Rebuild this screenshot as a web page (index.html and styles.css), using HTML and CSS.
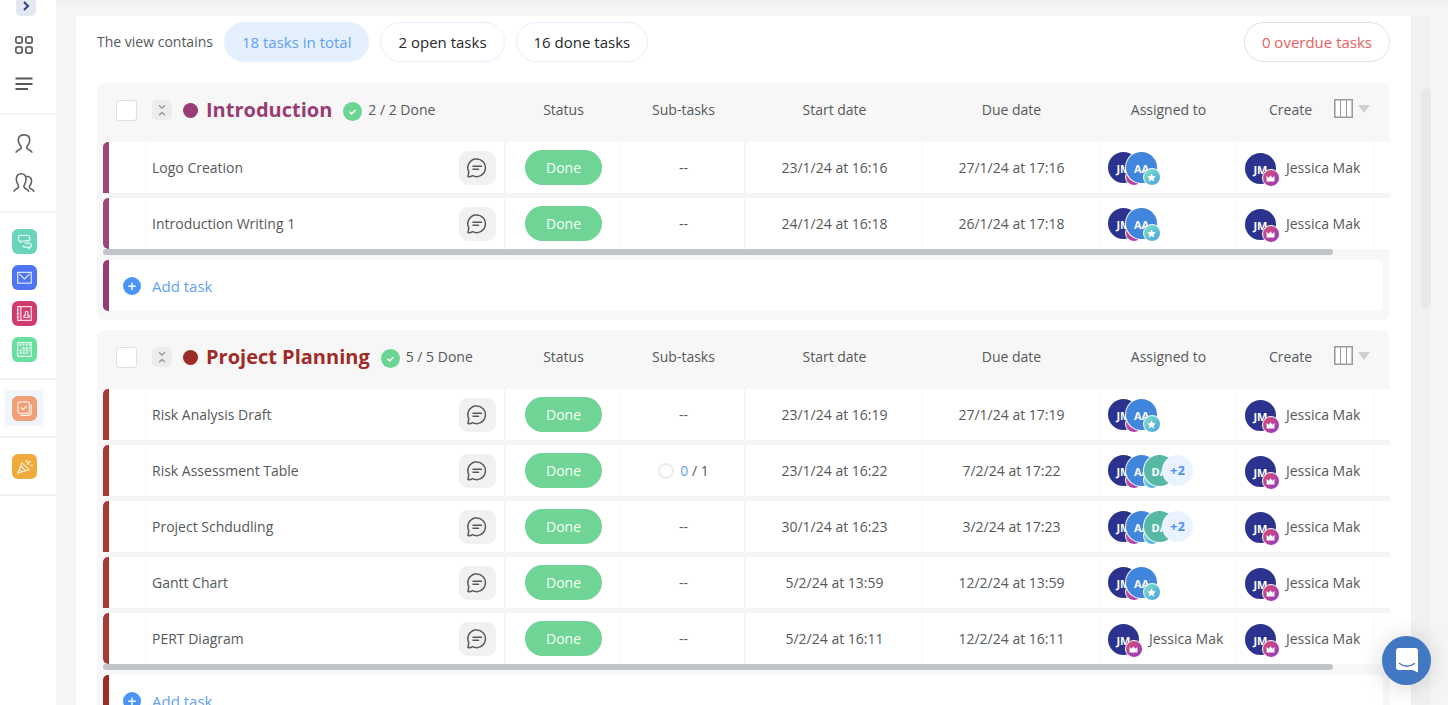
FILE: index.html
```html
<!DOCTYPE html>
<html lang="en">
<head>
<meta charset="utf-8">
<title>Tasks</title>
<link rel="stylesheet" href="styles.css">
</head>
<body>
<svg class="sprite" aria-hidden="true">
  <symbol id="comment" viewBox="0 0 20 20"><path d="M1 18.600 1.800 13.800A8.800 8.800 0 1 1 5.600 17.600Q3.500 18.900 1 18.600ZM6 8.200H14.500M6 11.300H11.500" fill="none" stroke="currentColor" stroke-width="1.500" stroke-linejoin="round" stroke-linecap="round"/></symbol>
  <symbol id="crown" viewBox="0 0 10 8"><path d="M0.5 1 3 3.2 5 .4 7 3.2 9.500 1V7.500H.5Z" fill="#fff"/></symbol>
  <symbol id="star" viewBox="0 0 10 10"><path d="M5 .3 6.400 3.400 9.800 3.800 7.300 6.100 8 9.500 5 7.800 2 9.500 2.700 6.100.2 3.800 3.600 3.400Z" fill="#fff"/></symbol>
  <symbol id="check" viewBox="0 0 19 19"><circle cx="9.500" cy="9.500" r="9.500" fill="#6bd694"/><path d="M6.600 9.900 8.700 11.900 12.500 8" fill="none" stroke="#fff" stroke-width="1.500"/></symbol>
  <symbol id="collapse" viewBox="0 0 20 20"><path d="M7 5.200 10 8 13 5.200M7 15.300 10 12.500 13 15.300" fill="none" stroke="#96999c" stroke-width="1.400"/></symbol>
  <symbol id="columns" viewBox="0 0 19 19"><path d="M.8.8H18.200V18.200H.8Z" fill="#fff" stroke="#979b9f" stroke-width="1.600"/><path d="M6.500 1V18M12.500 1V18" stroke="#979b9f" stroke-width="1"/></symbol>
  <symbol id="plus" viewBox="0 0 18 18"><circle cx="9" cy="9" r="9" fill="#4a94f8"/><path d="M9 5.500V13M5.200 9.300H12.800" stroke="#fff" stroke-width="1.400"/></symbol>
</svg>

<nav class="sidebar" aria-label="Main">
  <div class="side-group side-top">
    <button class="expand" aria-label="Expand menu"><svg width="8" height="10" viewBox="0 0 8 10"><path d="M2 1 6 5 2 9" fill="none" stroke="#2b4577" stroke-width="2"/></svg></button>
    <a href="#" aria-label="Dashboard"><svg width="20" height="20" viewBox="0 0 20 20" fill="none" stroke="#606467" stroke-width="1.800"><rect x="1.900" y="1.900" width="6.200" height="6.200" rx="1.800"/><rect x="11.900" y="1.900" width="6.200" height="6.200" rx="1.800"/><rect x="1.900" y="11.900" width="6.200" height="6.200" rx="1.800"/><rect x="11.900" y="11.900" width="6.200" height="6.200" rx="1.800"/></svg></a>
    <a href="#" aria-label="List"><svg width="20" height="20" viewBox="0 0 20 20" fill="none" stroke="#55595c" stroke-width="2"><path d="M1.500 4.500H18.500M1.500 10H18.500M1.500 15H14"/></svg></a>
  </div>
  <div class="side-group side-people">
    <a href="#" aria-label="Contact"><svg width="22" height="22" viewBox="0 0 22 22" fill="none" stroke="#606467" stroke-width="1.700"><path d="M3 19.800C3.200 17 6.500 17.300 8 15.500 8.500 14.800 8.300 13.800 7.500 12.800 5.800 11 5.300 9 5.300 7 5.300 3.500 7.500 1.800 11 1.800S16.700 3.500 16.700 7C16.700 9 16.200 11 14.500 12.800 13.700 13.800 13.500 14.800 14 15.500 15.500 17.300 18.800 17 19 19.800"/></svg></a>
    <a href="#" aria-label="Groups"><svg width="22" height="22" viewBox="0 0 22 22" fill="none" stroke="#606467" stroke-width="1.600"><path d="M1 19.800C1.200 17 4 17.300 5.300 15.500 5.800 14.800 5.600 13.800 5 12.800 3.800 11 3.300 9 3.300 7 3.300 3.500 5.300 1.800 8.200 1.800S13 3.500 13 7C13 9 12.500 11 11.500 12.800 10.800 13.800 10.700 14.800 11.200 15.500 12.500 17.300 15.300 17 15.800 19.800M12 4.200C16 4 18.600 5.500 18.600 8.800 18.600 11 18 12.300 16.800 13.600 16.100 14.500 16.100 15.200 16.700 16 17.800 17.300 20.500 17.200 21 19.800"/></svg></a>
  </div>
  <div class="side-group side-apps">
    <a href="#" class="app teal" aria-label="Chat"><svg width="24" height="24" viewBox="0 0 24 24"><path d="M8 6h7q2 0 2 2v1.500q0 2-2 2H10.500L8 13V11.500Q6 11.500 6.200 9.500V8Q6.200 6 8 6ZM12 13.500H16.500Q18.500 13.500 18.500 15.500T16.500 17.500V19L14.800 17.500H13Q10.500 17.500 10.500 15.500"/></svg></a>
    <a href="#" class="app blue" aria-label="Mail"><svg width="24" height="24" viewBox="0 0 24 24"><path d="M5.500 7H18.500V17.500H5.500ZM7 8.500 12 13.500 17 8.500"/></svg></a>
    <a href="#" class="app pink" aria-label="Contacts book"><svg width="24" height="24" viewBox="0 0 24 24"><path d="M5.500 5.500H18.500V18.500H5.500ZM8.500 5.500V18.500M4.500 8.500H7M4.500 12H7M4.500 15.500H7M11.500 15.800V13.800H12.800V12Q12.500 10 14 10T15.200 12V13.800H16.500V15.800Z"/></svg></a>
    <a href="#" class="app green" aria-label="Calendar"><svg width="24" height="24" viewBox="0 0 24 24"><path d="M5.500 5.500H18.500V18.500H5.500Z"/><path d="M8 6.500V8.500M11 6.500V8.500M14 6.500V8.500M17 6.500V8.500M10 10.500H17M7.500 13H17M7.500 15.500H15" stroke-dasharray="2 1" stroke-width="1.800"/></svg></a>
  </div>
  <div class="side-group side-one">
    <span class="current"><a href="#" class="app orange" aria-label="Tasks" aria-current="page"><svg width="24" height="24" viewBox="0 0 24 24"><rect x="5.700" y="5.700" width="11" height="11" rx="2"/><path d="M8.800 11 10.800 13 14 9.500M18.500 8V16Q18.500 18.500 16 18.500H8"/></svg></a></span>
  </div>
  <div class="side-group side-one">
    <a href="#" class="app amber" aria-label="What's new"><svg width="24" height="24" viewBox="0 0 24 24"><path d="M9.500 8.500 5.500 18.500 16.500 15ZM8.500 11.500 12.500 16M7 15 9.500 17.500M9.500 8.500 16.500 15M13 6.500Q15 6 14.500 8.500M15 10.500Q15 7.500 18 7M17.500 11.500Q19 10 20 11.500M17.500 5.500V5.800"/></svg></a>
  </div>
</nav>

<main class="content">
  <div class="panel">
    <div class="filters">
      <span class="filters-label">The view contains</span>
      <button class="pill active">18 tasks in total</button>
      <button class="pill">2 open tasks</button>
      <button class="pill">16 done tasks</button>
      <button class="pill overdue">0 overdue tasks</button>
    </div>

    <section class="group purple">
      <table>
        <colgroup><col class="c-bar"><col class="c-check"><col><col class="c-status"><col class="c-sub"><col class="c-date"><col class="c-date"><col class="c-people"><col class="c-people"><col class="c-rest"></colgroup>
        <thead><tr>
          <th colspan="3"><div class="group-head"><input type="checkbox" aria-label="Select Introduction"><button class="fold" aria-label="Collapse"><svg width="20" height="20"><use href="#collapse"/></svg></button><span class="dot"></span><h2>Introduction</h2><svg class="tick" width="19" height="19"><use href="#check"/></svg><span>2 / 2 Done</span></div></th>
          <th>Status</th><th>Sub-tasks</th><th>Start date</th><th>Due date</th><th>Assigned to</th>
          <th colspan="2"><div class="last-head"><span>Create</span><button class="cols" aria-label="Columns"><svg width="19" height="19"><use href="#columns"/></svg><span class="caret"></span></button></div></th>
        </tr></thead>
        <tbody>
          <tr><td class="bar"></td><td></td><td class="name"><div><span>Logo Creation</span><button class="note" aria-label="Comments"><svg width="20" height="20"><use href="#comment"/></svg></button></div></td><td><button class="status">Done</button></td><td class="strong">--</td><td>23/1/24 at 16:16</td><td>27/1/24 at 17:16</td>
            <td><div class="people stack"><span class="avatar">JM<i class="badge"></i></span><span class="avatar aa">AA<i class="badge star"><svg width="9" height="9"><use href="#star"/></svg></i></span></div></td>
            <td><div class="people"><span class="avatar">JM<i class="badge"><svg width="9" height="7"><use href="#crown"/></svg></i></span>Jessica Mak</div></td><td></td></tr>
          <tr><td class="bar"></td><td></td><td class="name"><div><span>Introduction Writing 1</span><button class="note" aria-label="Comments"><svg width="20" height="20"><use href="#comment"/></svg></button></div></td><td><button class="status">Done</button></td><td class="strong">--</td><td>24/1/24 at 16:18</td><td>26/1/24 at 17:18</td>
            <td><div class="people stack"><span class="avatar">JM<i class="badge"></i></span><span class="avatar aa">AA<i class="badge star"><svg width="9" height="9"><use href="#star"/></svg></i></span></div></td>
            <td><div class="people"><span class="avatar">JM<i class="badge"><svg width="9" height="7"><use href="#crown"/></svg></i></span>Jessica Mak</div></td><td></td></tr>
        </tbody>
      </table>
      <div class="hscroll"></div>
      <button class="add"><svg width="18" height="18"><use href="#plus"/></svg>Add task</button>
    </section>

    <section class="group red">
      <table>
        <colgroup><col class="c-bar"><col class="c-check"><col><col class="c-status"><col class="c-sub"><col class="c-date"><col class="c-date"><col class="c-people"><col class="c-people"><col class="c-rest"></colgroup>
        <thead><tr>
          <th colspan="3"><div class="group-head"><input type="checkbox" aria-label="Select Project Planning"><button class="fold" aria-label="Collapse"><svg width="20" height="20"><use href="#collapse"/></svg></button><span class="dot"></span><h2>Project Planning</h2><svg class="tick" width="19" height="19"><use href="#check"/></svg><span>5 / 5 Done</span></div></th>
          <th>Status</th><th>Sub-tasks</th><th>Start date</th><th>Due date</th><th>Assigned to</th>
          <th colspan="2"><div class="last-head"><span>Create</span><button class="cols" aria-label="Columns"><svg width="19" height="19"><use href="#columns"/></svg><span class="caret"></span></button></div></th>
        </tr></thead>
        <tbody>
          <tr><td class="bar"></td><td></td><td class="name"><div><span>Risk Analysis Draft</span><button class="note" aria-label="Comments"><svg width="20" height="20"><use href="#comment"/></svg></button></div></td><td><button class="status">Done</button></td><td class="strong">--</td><td>23/1/24 at 16:19</td><td>27/1/24 at 17:19</td>
            <td><div class="people stack"><span class="avatar">JM<i class="badge"></i></span><span class="avatar aa">AA<i class="badge star"><svg width="9" height="9"><use href="#star"/></svg></i></span></div></td>
            <td><div class="people"><span class="avatar">JM<i class="badge"><svg width="9" height="7"><use href="#crown"/></svg></i></span>Jessica Mak</div></td><td></td></tr>
          <tr><td class="bar"></td><td></td><td class="name"><div><span>Risk Assessment Table</span><button class="note" aria-label="Comments"><svg width="20" height="20"><use href="#comment"/></svg></button></div></td><td><button class="status">Done</button></td><td class="strong"><div class="subs"><span class="ring"></span><span><b>0</b> / 1</span></div></td><td>23/1/24 at 16:22</td><td>7/2/24 at 17:22</td>
            <td><div class="people stack"><span class="avatar">JM<i class="badge"></i></span><span class="avatar aa">AA<i class="badge star"></i></span><span class="avatar da">DA</span><span class="avatar more">+2</span></div></td>
            <td><div class="people"><span class="avatar">JM<i class="badge"><svg width="9" height="7"><use href="#crown"/></svg></i></span>Jessica Mak</div></td><td></td></tr>
          <tr><td class="bar"></td><td></td><td class="name"><div><span>Project Schdudling</span><button class="note" aria-label="Comments"><svg width="20" height="20"><use href="#comment"/></svg></button></div></td><td><button class="status">Done</button></td><td class="strong">--</td><td>30/1/24 at 16:23</td><td>3/2/24 at 17:23</td>
            <td><div class="people stack"><span class="avatar">JM<i class="badge"></i></span><span class="avatar aa">AA<i class="badge star"></i></span><span class="avatar da">DA</span><span class="avatar more">+2</span></div></td>
            <td><div class="people"><span class="avatar">JM<i class="badge"><svg width="9" height="7"><use href="#crown"/></svg></i></span>Jessica Mak</div></td><td></td></tr>
          <tr><td class="bar"></td><td></td><td class="name"><div><span>Gantt Chart</span><button class="note" aria-label="Comments"><svg width="20" height="20"><use href="#comment"/></svg></button></div></td><td><button class="status">Done</button></td><td class="strong">--</td><td>5/2/24 at 13:59</td><td>12/2/24 at 13:59</td>
            <td><div class="people stack"><span class="avatar">JM<i class="badge"></i></span><span class="avatar aa">AA<i class="badge star"><svg width="9" height="9"><use href="#star"/></svg></i></span></div></td>
            <td><div class="people"><span class="avatar">JM<i class="badge"><svg width="9" height="7"><use href="#crown"/></svg></i></span>Jessica Mak</div></td><td></td></tr>
          <tr><td class="bar"></td><td></td><td class="name"><div><span>PERT Diagram</span><button class="note" aria-label="Comments"><svg width="20" height="20"><use href="#comment"/></svg></button></div></td><td><button class="status">Done</button></td><td class="strong">--</td><td>5/2/24 at 16:11</td><td>12/2/24 at 16:11</td>
            <td><div class="people"><span class="avatar">JM<i class="badge"><svg width="9" height="7"><use href="#crown"/></svg></i></span>Jessica Mak</div></td>
            <td><div class="people"><span class="avatar">JM<i class="badge"><svg width="9" height="7"><use href="#crown"/></svg></i></span>Jessica Mak</div></td><td></td></tr>
        </tbody>
      </table>
      <div class="hscroll"></div>
      <button class="add"><svg width="18" height="18"><use href="#plus"/></svg>Add task</button>
    </section>
  </div>
  <div class="vscroll"><div class="thumb"></div></div>
</main>

<button class="messenger" aria-label="Open messenger"><svg width="22" height="25" viewBox="0 0 22 25"><path d="M3 0H19Q22 0 22 3V24.500L16.500 22H3Q0 22 0 19V3Q0 0 3 0Z" fill="#fff"/><path d="M3.500 15.500Q11 21 18.500 15.500" fill="none" stroke="#4178c1" stroke-width="1.500" stroke-linecap="round"/></svg></button>
</body>
</html>
```
FILE: styles.css
```css
* { box-sizing: border-box; }

body {
  margin: 0;
  height: 100vh;
  overflow: hidden;
  display: flex;
  background: #f5f5f5;
  color: #55595b;
  font: 14px/20px "Open Sans", "Noto Sans", sans-serif;
}

button {
  border: 0;
  padding: 0;
  background: none;
  color: inherit;
  font: inherit;
}

svg { display: block; flex: none; }
.sprite { position: absolute; width: 0; height: 0; }

/* Sidebar */
.sidebar {
  flex: none;
  width: 56px;
  background: #fff;
}

.side-group {
  display: flex;
  flex-direction: column;
  align-items: center;
  width: 100%;
  padding-right: 8px;
  border-bottom: 2px solid #f3f3f3;
}

.side-top { height: 115px; gap: 19px; }
.side-people { height: 98px; padding-top: 18px; gap: 17px; }
.side-apps { padding: 16px 8px 16px 0; gap: 11px; height: 167px; }
.side-one { height: 58px; justify-content: center; }

.expand {
  width: 20px;
  height: 16px;
  margin-left: 4px;
  padding-top: 1px;
  display: flex;
  align-items: flex-start;
  justify-content: center;
  background: #e4e8f0;
  border-radius: 0 0 5px 5px;
}

.app { width: 25px; height: 25px; border-radius: 6px; }
.app svg {
  width: 25px;
  height: 25px;
  fill: none;
  stroke: #fff;
  stroke-opacity: .8;
  stroke-width: 1.2;
  stroke-linejoin: round;
}
.teal { background: #68d5ba; }
.blue { background: #4d75f5; }
.pink { background: #d03c70; }
.green { background: #69dfa2; }
.orange { background: #f09e75; }
.amber { background: #f0a93b; }

.current {
  display: flex;
  align-items: center;
  justify-content: center;
  width: 38px;
  height: 36px;
  background: #eff5fb;
  border-radius: 4px;
}

/* Content */
.content {
  flex: 1;
  min-width: 0;
  display: flex;
  align-items: flex-start;
  padding: 16px 17px 0 20px;
  background: linear-gradient(#efefef, #f5f5f5 8px);
}

.panel {
  flex: 1;
  min-width: 0;
  min-height: 100vh;
  padding: 6px 21px 20px;
  background: #fff;
}

.vscroll {
  flex: none;
  width: 20px;
  height: 100vh;
  padding-top: 72px;
  background: #f1f1f1;
}
.thumb {
  width: 10px;
  height: 221px;
  margin-left: 10px;
  border-radius: 5px;
  background: #e8e8e8;
}

.filters {
  display: flex;
  align-items: center;
  gap: 11px;
  margin-bottom: 21px;
}

.pill {
  height: 40px;
  padding: 0 17px;
  border: 1px solid #e8f0fe;
  border-radius: 20px;
  background: #fff;
  color: #26282a;
  font-size: 15px;
}
.pill.active { border-color: #e4f0fd; background: #e4f0fd; color: #5f9ff8; }
.pill.overdue { margin-left: auto; border-color: #e0e0e0; color: #e9605c; }

/* Task groups */
.group {
  margin-bottom: 10px;
  padding: 0 0 9px 6px;
  overflow: hidden;
  border-radius: 8px;
  background: #f7f7f7;
}
.purple { --accent: #973c74; --bar: #9c467b; }
.red { --accent: #9f2b27; --bar: #a63a36; }

table {
  width: 100%;
  table-layout: fixed;
  border-collapse: separate;
  border-spacing: 0;
}
.c-bar { width: 6px; }
.c-check { width: 37px; }
.c-status { width: 115px; }
.c-sub { width: 125px; }
.c-date { width: 177px; }
.c-people { width: 137px; }
.c-rest { width: 16px; }

th {
  height: 59px;
  padding: 0 0 5px;
  font-weight: 400;
  text-align: center;
}

.group-head { display: flex; align-items: center; padding-left: 13px; }
.group-head input {
  appearance: none;
  width: 21px;
  height: 21px;
  margin: 0 15px 0 0;
  border: 1px solid #dfdfdf;
  border-radius: 3px;
  background: #fff;
}
.fold { border-radius: 5px; background: #ececec; }
.dot {
  width: 15px;
  height: 15px;
  margin: 0 8px 0 11px;
  border-radius: 50%;
  background: var(--accent);
}
h2 { margin: 0; color: var(--accent); font-size: 20px; line-height: 28px; }
.tick { margin: 3px 6px 0 11px; }

.last-head { display: flex; align-items: center; justify-content: space-between; padding: 0 20px 0 32px; }
.cols { display: flex; align-items: center; gap: 5px; padding-bottom: 3px; }
.caret {
  border: 6px solid transparent;
  border-top: 8px solid #d0d0d0;
  border-bottom: 0;
}

td {
  height: 56px;
  padding: 0;
  border-bottom: 5px solid #f5f5f5;
  background: #fff;
  box-shadow: inset -1px 0 #f9f9f9;
  text-align: center;
}
tr:last-child td { height: 51px; border-bottom: 0; }
td.name, td.strong { box-shadow: inset -2px 0 #f5f5f5; }
td:last-child { box-shadow: none; }
td.bar {
  background: linear-gradient(var(--bar), var(--bar)) padding-box, #f5f5f5;
  border-radius: 5px 0 0 5px;
  box-shadow: none;
  border-bottom-color: #f7f7f7;
}

.name div {
  display: flex;
  align-items: center;
  justify-content: space-between;
  padding: 0 10px 0 6px;
}
.note {
  display: flex;
  align-items: center;
  justify-content: center;
  width: 37px;
  height: 34px;
  border-radius: 9px;
  background: #f1f1f1;
}

.status {
  width: 77px;
  height: 35px;
  border-radius: 18px;
  background: #70d496;
  color: #f1fff6;
}

.subs { display: flex; align-items: center; justify-content: center; gap: 6px; }
.subs b { color: #5f9ff8; font-weight: 400; }
.ring { width: 16px; height: 16px; border: 2px solid #ececec; border-radius: 50%; }

.people { display: flex; align-items: center; gap: 10px; padding-left: 8px; }
.people .avatar { margin-top: 2px; }
.people.stack { gap: 0; }
.people.stack .avatar { margin-top: 0; }
.avatar {
  position: relative;
  width: 31px;
  height: 31px;
  border-radius: 50%;
  background: #2c338f;
  color: #fff;
  font-size: 11px;
  font-weight: 700;
  line-height: 33px;
  text-align: center;
}
.people.stack .avatar + .avatar { margin-left: -13px; box-shadow: 0 0 0 1px #fff; }
.avatar.aa { background: #4086dd; }
.avatar.da { background: #57b9a5; }
.people.stack .avatar.more { background: #e9f2fe; color: #4a91f5; font-size: 13px; line-height: 31px; box-shadow: none; }

/* Role badge on the corner of an avatar */
.badge {
  position: absolute;
  right: -4px;
  bottom: -3px;
  display: flex;
  align-items: center;
  justify-content: center;
  width: 18px;
  height: 18px;
  border: 1px solid #fff;
  border-radius: 50%;
  background: linear-gradient(135deg, #de5268, #9135cd);
}
.badge.star { background: linear-gradient(135deg, #7fe3c6, #4a9fe0); }

.hscroll {
  width: calc(100% - 57px);
  height: 6px;
  margin-bottom: 5px;
  border-radius: 3px;
  background: #c1c5ca;
}

.add {
  display: flex;
  align-items: center;
  gap: 11px;
  width: calc(100% - 7px);
  height: 51px;
  padding-left: 14px;
  border-left: 6px solid var(--accent);
  border-radius: 5px;
  background: #fff;
  color: #5f9ff8;
  font-size: 15px;
}

/* Floating messenger launcher */
.messenger {
  position: fixed;
  right: 17px;
  bottom: 20px;
  display: flex;
  align-items: center;
  justify-content: center;
  width: 49px;
  height: 49px;
  border-radius: 50%;
  background: #4178c1;
  box-shadow: 0 2px 24px rgba(0, 0, 0, .16);
}
```
